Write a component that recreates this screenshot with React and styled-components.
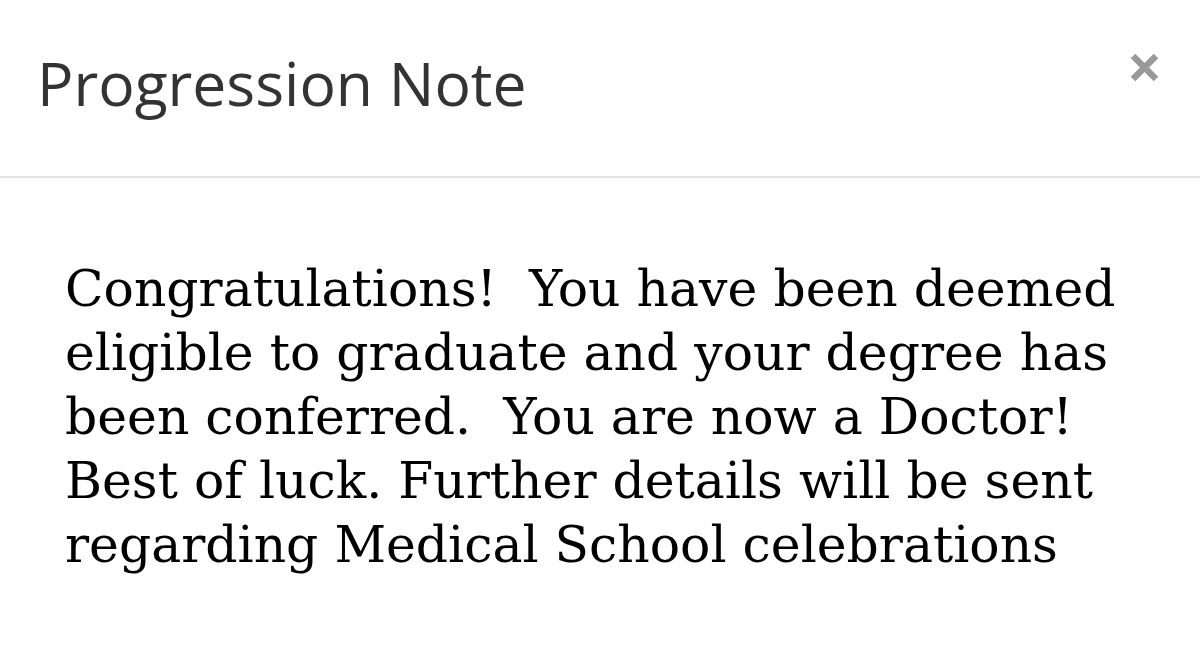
import React from "react";
import styled, { createGlobalStyle } from "styled-components";

const Global = createGlobalStyle`
  html, body { margin: 0; padding: 0; background: #fff; }
  body { width: 1200px; height: 647px; overflow: hidden; }
`;

const Modal = styled.div`
  width: 1200px;
  height: 647px;
  background: #fff;
  display: flex;
  flex-direction: column;
`;

const Header = styled.div`
  display: flex;
  justify-content: space-between;
  align-items: flex-start;
  height: 176px;
  padding: 0 40px 0 37px;
  border-bottom: 2px solid #e3e3e3;
  box-sizing: content-box;
`;

const Title = styled.h4`
  margin: 0;
  padding-top: 42px;
  font-family: "Open Sans", sans-serif;
  font-weight: 400;
  font-size: 60.6px;
  line-height: 82px;
  color: #333;
`;

const Close = styled.button`
  margin-top: 51px;
  padding: 0;
  border: 0;
  background: none;
  width: 32px;
  height: 32px;
  display: flex;
  align-items: center;
  justify-content: center;
  cursor: pointer;
`;

const Body = styled.div`
  padding: 79px 20px 0 65px;
`;

const Text = styled.p`
  margin: 0;
  font-family: "DejaVu Serif", serif;
  font-size: 50.4px;
  line-height: 64px;
  color: #000;
  white-space: pre-wrap;
`;

export default function App() {
  return (
    <>
      <Global />
      <Modal>
        <Header>
          <Title>Progression Note</Title>
          <Close aria-label="Close">
            <svg width="31" height="31" viewBox="0 0 31 31">
              <path d="M4 4 L27 27 M27 4 L4 27" stroke="#999" strokeWidth="6.5" strokeLinecap="butt" />
            </svg>
          </Close>
        </Header>
        <Body>
          <Text>
            {"Congratulations!  You have been deemed\neligible to graduate and your degree has\nbeen conferred.  You are now a Doctor!\nBest of luck. Further details will be sent\nregarding Medical School celebrations"}
          </Text>
        </Body>
      </Modal>
    </>
  );
}
